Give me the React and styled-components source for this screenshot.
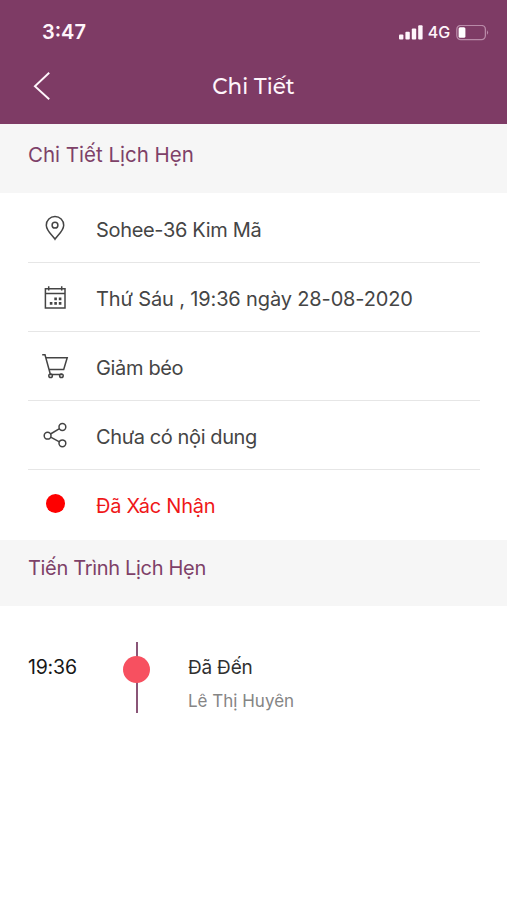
import React from "react";
import styled, { createGlobalStyle } from "styled-components";

const GlobalStyle = createGlobalStyle`
  * { box-sizing: border-box; }
  body { margin: 0; background: #fff; font-family: Inter, "Noto Sans", sans-serif; }
  svg { display: block; }
`;

const Screen = styled.main`
  display: flex;
  flex-direction: column;
  width: 507px;
  height: 900px;
  overflow: hidden;
  background: #fff;
`;

const Header = styled.header`
  height: 124px;
  background: #7e3b65;
  color: #fff5fb;
`;

const StatusBar = styled.div`
  display: flex;
  justify-content: space-between;
  height: 58px;
  padding: 20px 18px 0 42px;
`;

const Clock = styled.span`
  font-size: 20px;
  line-height: 25px;
  font-weight: 600;
`;

const Indicators = styled.div`
  display: flex;
  align-items: center;
  height: 25px;
`;

const Network = styled.span`
  margin: 0 6px 0 5px;
  font-size: 16px;
  font-weight: 500;
  line-height: 25px;
  letter-spacing: -0.1px;
`;

const NavBar = styled.nav`
  display: grid;
  grid-template-columns: 80px 1fr 80px;
  height: 56px;
`;

const BackButton = styled.button`
  display: flex;
  align-items: flex-start;
  border: 0;
  padding: 13px 0 0 33px;
  background: none;
  color: inherit;
`;

const Title = styled.h1`
  margin: 0;
  font-family: Montserrat, Inter, sans-serif;
  font-size: 21.5px;
  font-weight: 500;
  line-height: 56px;
  text-align: center;
`;

const SectionHeading = styled.h2`
  flex: none;
  margin: 0;
  height: ${(p) => p.$height}px;
  padding: ${(p) => p.$top}px 28px 0;
  background: #f6f6f6;
  color: #7e4168;
  font-size: ${(p) => p.$size}px;
  font-weight: 400;
  line-height: 26px;
  letter-spacing: ${(p) => p.$track}px;
`;

const Details = styled.ul`
  list-style: none;
  margin: 0;
  padding: 1px 27px 0 28px;
  height: 347px;
`;

const DetailRow = styled.li`
  display: grid;
  grid-template-columns: 54px 1fr;
  column-gap: 14px;
  height: 69px;
  border-bottom: 1px solid #e6e6e6;
  color: ${(p) => (p.$alert ? "#ef1719" : "#454545")};
  &:last-child { border-bottom: 0; }
`;

const DetailIcon = styled.span`
  display: flex;
  justify-content: center;
  padding-top: 20px;
`;

const DetailText = styled.span`
  padding-top: 23px;
  font-size: 20px;
  line-height: 26px;
  white-space: nowrap;
  letter-spacing: ${(p) => p.$track}px;
`;

const StatusDot = styled.span`
  width: 19px;
  height: 19px;
  margin-top: 4px;
  margin-left: 1px;
  border-radius: 50%;
  background: #fe0000;
`;

const TimelineItem = styled.section`
  display: grid;
  grid-template-columns: 94px 28px 1fr;
  padding: 36px 28px 0;
`;

const Time = styled.time`
  padding-top: 12px;
  color: #171717;
  font-size: 19.5px;
  line-height: 26px;
  letter-spacing: -0.2px;
`;

const Track = styled.div`
  display: grid;
  height: 71px;
  justify-items: center;
  background: linear-gradient(#8a5577, #8a5577) 14px 0 / 2px 100% no-repeat;
`;

const Marker = styled.span`
  width: 27px;
  height: 27px;
  margin-top: 14px;
  border-radius: 50%;
  background: #f75060;
`;

const Entry = styled.div`
  padding: 12px 0 0 38px;
`;

const EntryStatus = styled.div`
  color: #303030;
  font-size: 19px;
  line-height: 27px;
  letter-spacing: -0.2px;
`;

const EntryPerson = styled.div`
  margin-top: 8px;
  color: #858585;
  font-size: 17px;
  line-height: 25px;
`;

const Stroke = ({ width = 28, height = 28, children }) => (
  <svg width={width} height={height} viewBox={`0 0 ${width} ${height}`} fill="none"
    stroke="#444" strokeWidth="1.5" aria-hidden="true">
    {children}
  </svg>
);

const PinIcon = () => (
  <Stroke>
    <path d="M14 25.2C12.4 22.4 5.3 16.9 5.3 11.2a8.7 8.7 0 0 1 17.4 0C22.7 16.9 15.6 22.4 14 25.2Z" />
    <circle cx="14" cy="11.2" r="2.9" />
  </Stroke>
);

const CalendarIcon = () => (
  <Stroke>
    <path d="M4.4 5.8h19.6v19.3H4.4ZM4.4 10.5h19.6M7.7 3.3v4.2M20.7 3.3v4.2" />
    <path d="M13.3 15.9h2.6M17.8 15.9h2.6M8.8 20.3h2.6M13.3 20.3h2.6M17.8 20.3h2.6" strokeWidth="2.8" />
  </Stroke>
);

const CartIcon = () => (
  <Stroke>
    <path d="M1.2 2.7H4L9.4 22.5H21M5 5.8h21.2l-3.5 11.7H8.2" />
    <circle cx="9.6" cy="23.7" r="1.8" />
    <circle cx="20.4" cy="23.7" r="1.8" />
  </Stroke>
);

const ShareIcon = () => (
  <Stroke>
    <circle cx="6.6" cy="14.7" r="3.4" />
    <circle cx="21.4" cy="6" r="3.4" />
    <circle cx="21.4" cy="22.3" r="3.4" />
    <path d="M9.5 13 18.5 7.7M9.7 16.2l8.7 4.6" />
  </Stroke>
);

const details = [
  { icon: <PinIcon />, text: "Sohee-36 Kim Mã", track: -0.33 },
  { icon: <CalendarIcon />, text: "Thứ Sáu , 19:36 ngày 28-08-2020", track: -0.14 },
  { icon: <CartIcon />, text: "Giảm béo", track: -0.35 },
  { icon: <ShareIcon />, text: "Chưa có nội dung", track: -0.39 },
  { icon: <StatusDot />, text: "Đã Xác Nhận", track: -0.25, alert: true },
];

export default function App() {
  return (
    <Screen>
      <GlobalStyle />
      <Header>
        <StatusBar>
          <Clock>3:47</Clock>
          <Indicators>
            <svg width="24" height="16" viewBox="0 0 24 16" fill="currentColor" aria-hidden="true">
              <rect x="0" y="9.4" width="4.4" height="5.2" rx="1" />
              <rect x="6.4" y="6.8" width="4.4" height="7.8" rx="1" />
              <rect x="12.8" y="3.6" width="4.4" height="11" rx="1" />
              <rect x="19.2" y="0.2" width="4.4" height="14.4" rx="1" />
            </svg>
            <Network>4G</Network>
            <svg width="33" height="16" viewBox="0 0 33 16" aria-hidden="true">
              <rect x="0.8" y="0.4" width="28.6" height="14.2" rx="4" fill="none" stroke="#b98aa8" strokeWidth="1.3" />
              <rect x="2.6" y="2.3" width="6.8" height="10.4" rx="1.5" fill="#fff" />
              <path d="M31 5.2q2.2 2.3 0 4.6Z" fill="#b98aa8" />
            </svg>
          </Indicators>
        </StatusBar>
        <NavBar>
          <BackButton aria-label="Back">
            <svg width="18" height="30" viewBox="0 0 18 30" fill="none" stroke="currentColor" strokeWidth="1.9" aria-hidden="true">
              <path d="M16.2 1.8 1.9 15.2l14.3 13" />
            </svg>
          </BackButton>
          <Title>Chi Tiết</Title>
        </NavBar>
      </Header>
      <SectionHeading $height={69} $top={18} $size={20.5} $track={0}>Chi Tiết Lịch Hẹn</SectionHeading>
      <Details>
        {details.map((d) => (
          <DetailRow key={d.text} $alert={d.alert}>
            <DetailIcon>{d.icon}</DetailIcon>
            <DetailText $track={d.track}>{d.text}</DetailText>
          </DetailRow>
        ))}
      </Details>
      <SectionHeading $height={66} $top={15} $size={20} $track={-0.32}>Tiến Trình Lịch Hẹn</SectionHeading>
      <TimelineItem>
        <Time>19:36</Time>
        <Track><Marker /></Track>
        <Entry>
          <EntryStatus>Đã Đến</EntryStatus>
          <EntryPerson>Lê Thị Huyên</EntryPerson>
        </Entry>
      </TimelineItem>
    </Screen>
  );
}
